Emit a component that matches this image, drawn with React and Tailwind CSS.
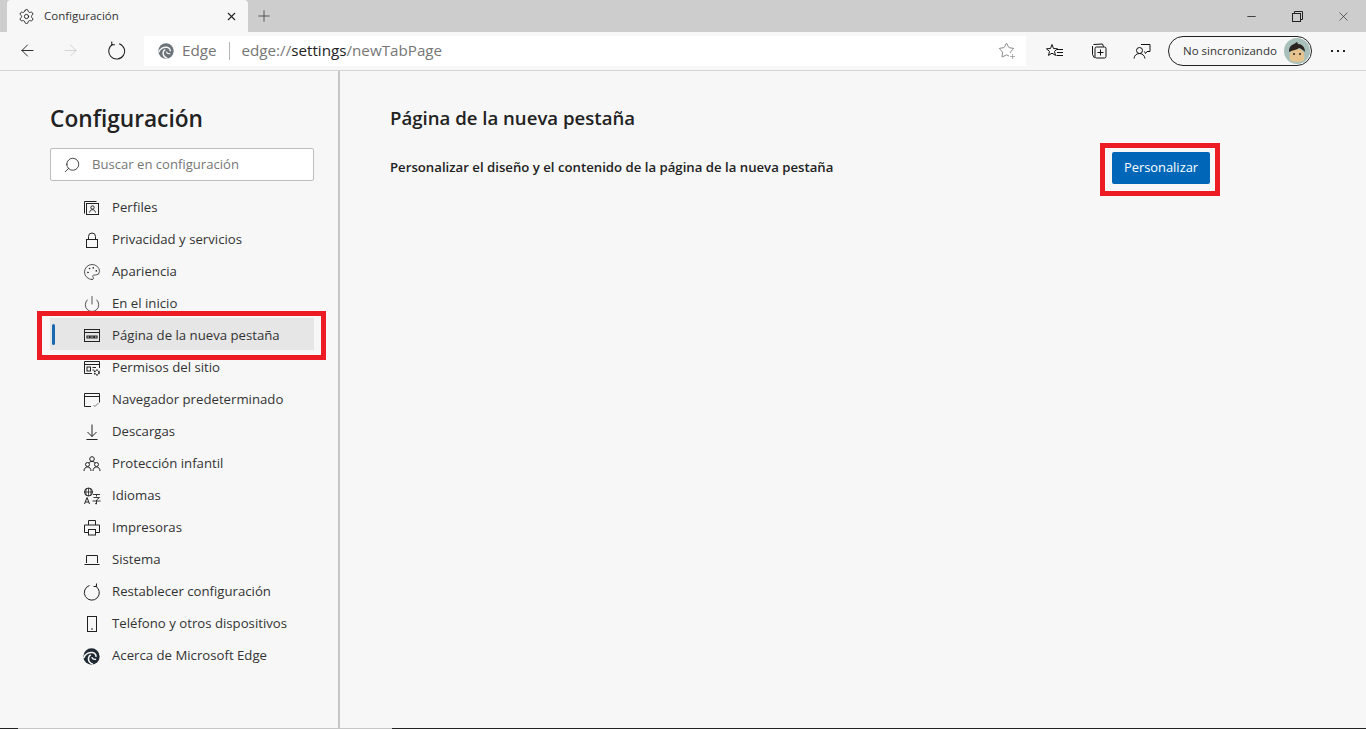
import { Search, Palette, Power, ArrowLeft, ArrowRight, Settings, X, Plus, Minus, Star } from "lucide-react";

const font = { fontFamily: '"Open Sans", "Noto Sans", sans-serif' };

function Svg({ children, size = 18, className = "" }) {
  return (
    <svg width={size} height={size} viewBox="0 0 18 18" fill="none" stroke="currentColor" strokeWidth="1" className={className}>
      {children}
    </svg>
  );
}

function EdgeLogo({ size = 16, color = "#1f2933" }) {
  return (
    <svg width={size} height={size} viewBox="0 0 24 24" fill="none">
      <circle cx="12" cy="12" r="11.500" fill={color} />
      <path d="M1 14c2-6 8-8.500 12.500-7.500 3.500.8 5.500 3.500 4.500 6" stroke="#f7f7f7" strokeWidth="2.200" />
      <path d="M14 23c-4-1.500-7-5-6-9.500.4-1.800 1.500-3 3-3.500" stroke="#f7f7f7" strokeWidth="2.200" />
      <path d="M12.500 13c.5 2 3 3.500 6 3" stroke="#f7f7f7" strokeWidth="1.800" />
    </svg>
  );
}

const ProfileIcon = () => (
  <Svg>
    <path d="M1.500 14.500V2.500h12" />
    <rect x="3.500" y="4.500" width="12" height="11" />
    <circle cx="9.500" cy="8.500" r="1.700" />
    <path d="M6.500 13.500c.5-2 1.500-2.800 3-2.800s2.500.8 3 2.800" />
  </Svg>
);
const LockIcon = () => (
  <Svg>
    <rect x="3.500" y="8.500" width="11" height="8" />
    <path d="M5.500 8.500V5.500a3.500 3.500 0 0 1 7 0v3" />
  </Svg>
);
const NewTabIcon = () => (
  <Svg>
    <rect x="1.500" y="2.500" width="15" height="12" />
    <path d="M1.500 5.500h15" />
    <path d="M4 9h2.500v2H4zM7.800 9h2.500v2H7.800zM11.500 9H14v2h-2.500z" strokeWidth="1.100" />
  </Svg>
);
const SiteIcon = () => (
  <Svg>
    <path d="M9 14.500H1.500v-12h15V9" />
    <path d="M1.500 5.500h15" />
    <rect x="4" y="8" width="3.500" height="4" />
    <path d="M9.500 8.500H13M9.500 11H11" />
    <circle cx="13.800" cy="13.500" r="2.300" strokeWidth="1.500" strokeDasharray="1.500 .8" />
  </Svg>
);
const BrowserIcon = () => (
  <Svg>
    <path d="M8 15.500H1.500v-13h15v9" />
    <path d="M1.500 5.500h15" />
    <path d="M10.500 14l1.500 1.500 3.500-3.500" stroke="#777" />
  </Svg>
);
const DownloadIcon = () => (
  <Svg>
    <path d="M9 1.500v12M4.500 9L9 13.500 13.500 9M3.500 16.500h11" />
  </Svg>
);
const FamilyIcon = () => (
  <Svg>
    <circle cx="9" cy="4" r="2.300" />
    <circle cx="4.500" cy="9.500" r="2" />
    <circle cx="13.500" cy="9.500" r="2" />
    <path d="M1 16c0-2.500 1.500-4 3.500-4s3.500 1.500 3.500 4M10 16c0-2.500 1.500-4 3.500-4s3.500 1.500 3.500 4M6 8c.5-1 1.500-1.500 3-1.500S11.500 7 12 8" />
  </Svg>
);
const LangIcon = () => (
  <Svg>
    <circle cx="5.500" cy="5" r="4" />
    <path d="M1.500 5h8M5.500 1v8M3.500 1.500c-.8 2-.8 5 0 7M7.500 1.500c.8 2 .8 5 0 7" strokeWidth=".8" />
    <path d="M1.500 17l2.500-6.500L6.500 17M2.500 15h3" />
    <path d="M10 7.500h7M13.500 7.500v2M10.500 10.500h6l-3 2.500v4l-1.500-.5M9.500 14h8" strokeWidth=".9" />
  </Svg>
);
const PrinterIcon = () => (
  <Svg>
    <path d="M5.500 6V1.500h7V6" />
    <path d="M5 13.500H1.500V6h15v7.500H13" />
    <rect x="5.500" y="10.500" width="7" height="5.500" />
  </Svg>
);
const LaptopIcon = () => (
  <Svg>
    <path d="M3.500 12V4.500h11V12" />
    <path d="M1.500 13.500h15" />
  </Svg>
);
const ReloadIcon = ({ size = 18, className = "" }) => (
  <Svg size={size} className={className}>
    <path d="M6.500 2.500a7.500 7.500 0 1 0 6 .6" />
    <path d="M13.500 .5v3h-3" />
  </Svg>
);
const PhoneIcon = () => (
  <Svg>
    <rect x="4.500" y="1.500" width="9" height="15" />
    <path d="M8 14h2" />
  </Svg>
);

const navItems = [
  { label: "Perfiles", icon: <ProfileIcon /> },
  { label: "Privacidad y servicios", icon: <LockIcon /> },
  { label: "Apariencia", icon: <Palette size={18} strokeWidth={1} /> },
  { label: "En el inicio", icon: <Power size={18} strokeWidth={1} /> },
  { label: "Página de la nueva pestaña", icon: <NewTabIcon />, active: true },
  { label: "Permisos del sitio", icon: <SiteIcon /> },
  { label: "Navegador predeterminado", icon: <BrowserIcon /> },
  { label: "Descargas", icon: <DownloadIcon /> },
  { label: "Protección infantil", icon: <FamilyIcon /> },
  { label: "Idiomas", icon: <LangIcon /> },
  { label: "Impresoras", icon: <PrinterIcon /> },
  { label: "Sistema", icon: <LaptopIcon /> },
  { label: "Restablecer configuración", icon: <ReloadIcon /> },
  { label: "Teléfono y otros dispositivos", icon: <PhoneIcon /> },
  { label: "Acerca de Microsoft Edge", icon: <EdgeLogo size={17} /> },
];

function TabStrip() {
  return (
    <div className="flex h-[32px] shrink-0 bg-[#cdcdcd] pl-[7px]">
      <div className="flex w-[241px] items-center rounded-t-[4px] bg-[#f7f7f7] pl-[11px] pr-[10px]">
        <Settings size={17} strokeWidth={1.200} className="text-[#111]" />
        <span className="ml-[9px] flex-1 text-[11.500px] text-[#333]">Configuración</span>
        <X size={13} strokeWidth={2} className="text-[#222]" />
      </div>
      <div className="ml-[7px] flex items-center">
        <Plus size={18} strokeWidth={1} className="text-[#333]" />
      </div>
      <div className="ml-auto flex items-center">
        <div className="flex w-[46px] justify-center">
          <Minus size={13} strokeWidth={1.500} className="text-[#222]" />
        </div>
        <div className="flex w-[46px] justify-center">
          <svg width="11" height="11" viewBox="0 0 11 11" fill="none" stroke="#222" strokeWidth="1">
            <rect x=".5" y="2.500" width="8" height="8" />
            <path d="M2.500 2.500V.5h8v8H8.500" />
          </svg>
        </div>
        <div className="flex w-[46px] justify-center">
          <X size={15} strokeWidth={1} className="text-[#222]" />
        </div>
      </div>
    </div>
  );
}

function ToolBar() {
  return (
    <div className="flex h-[39px] shrink-0 items-center border-b border-[#d4d4d4] bg-[#f7f7f7] pb-[1px]">
      <ArrowLeft size={19} strokeWidth={1.100} className="ml-[18px] text-[#111]" />
      <ArrowRight size={19} strokeWidth={1} className="ml-[24px] text-[#c8c8c8]" />
      <ReloadIcon size={19} className="ml-[27px] -scale-x-100 text-[#222]" />
      <div className="ml-[18px] flex h-[30px] w-[882px] items-center bg-white pl-[14px] pr-[11px]">
        <EdgeLogo size={16} color="#6b7278" />
        <span className="ml-[8px] text-[15.200px] text-[#767676]">Edge</span>
        <span className="ml-[12px] h-[18px] w-px bg-[#b5b5b5]" />
        <span className="ml-[12px] flex-1 text-[15.200px] text-[#767676]">
          edge://<span className="text-[#222]">settings</span>/newTabPage
        </span>
        <span className="relative">
          <Star size={17} strokeWidth={1} className="text-[#555]" />
          <Plus size={7} strokeWidth={1.500} className="absolute -bottom-[1px] -right-[1px] bg-white text-[#555]" />
        </span>
      </div>
      <Svg className="ml-[20px] text-[#111]">
        <path d="M6 2.500l1.500 4 4 .3-3 2.600 1 4-3.500-2.200-3.500 2.200 1-4-3-2.600 4-.3z" />
        <path d="M11 7.500h6M11 10.500h6M10.500 13.500h6.500" />
      </Svg>
      <Svg className="ml-[26px] text-[#111]">
        <path d="M2.500 4v8.500l2 3.500" />
        <path d="M3.500 2.500l9-.5 1 2.500" />
        <rect x="5" y="5" width="11" height="11" rx="1.500" />
        <path d="M10.500 7.500v6M7.500 10.500h6" />
      </Svg>
      <Svg className="ml-[25px] text-[#111]">
        <path d="M8 2.500h9v7h-3l-1.500 2-1-2" />
        <circle cx="6.500" cy="8.500" r="3" />
        <path d="M1 16.500c.3-3 2.500-5 5.500-5s5 2 5.500 5" />
      </Svg>
      <div className="ml-[17px] flex h-[30px] w-[144px] items-center rounded-full border border-[#222] pl-[14px] pr-[1px]">
        <span className="flex-1 text-[11.500px] text-[#333]">No sincronizando</span>
        <svg width="26" height="26" viewBox="0 0 26 26">
          <circle cx="13" cy="13" r="13" fill="#a9c0ba" />
          <path d="M6 22c-1-6 0-11 7-11s8 5 7 11c-2 2.500-12 2.500-14 0z" fill="#e7c48d" />
          <path d="M5 14c0-5 2-7 5-8l3-2 1 2c4 0 7 3 7 8-2-2-4-3.500-6-4-2 2-6 2-10 4z" fill="#2a2320" />
          <circle cx="10" cy="16" r="1" fill="#2a2320" />
          <circle cx="16" cy="16" r="1" fill="#2a2320" />
        </svg>
      </div>
      <div className="ml-[19px] flex gap-[4px]">
        <span className="h-[2px] w-[2px] bg-[#222]" />
        <span className="h-[2px] w-[2px] bg-[#222]" />
        <span className="h-[2px] w-[2px] bg-[#222]" />
      </div>
    </div>
  );
}

function Sidebar() {
  return (
    <aside className="relative w-[340px] shrink-0 border-r-2 border-[#c6c6c6] pl-[50px] pt-[32px]">
      <h1 className="text-[22.700px] font-semibold leading-[32px] text-[#222]">Configuración</h1>
      <div className="mt-[13px] flex h-[33px] w-[264px] items-center rounded-[2px] border border-[#bdbdbd] bg-white pl-[12px]">
        <Search size={18} strokeWidth={1.100} className="-scale-x-100 text-[#222]" />
        <span className="ml-[11px] text-[13.100px] text-[#767676]">Buscar en configuración</span>
      </div>
      <nav className="mt-[9px] flex w-[264px] flex-col">
        {navItems.map((item) => (
          <div
            key={item.label}
            className={`relative flex h-[32px] items-center pl-[33px] pt-[4px] ${item.active ? "bg-[#e6e6e6]" : ""}`}
          >
            {item.active && (
              <span className="absolute left-[2px] top-[6px] h-[21px] w-[3px] rounded-full bg-[#1a69b0]" />
            )}
            <span className="flex w-[29px] shrink-0 text-[#222]">{item.icon}</span>
            <span className="text-[13.200px] text-[#333]">{item.label}</span>
          </div>
        ))}
      </nav>
      {/* recuadro rojo sobre la captura */}
      <div className="absolute left-[37px] top-[240px] h-[49px] w-[289px] border-[5px] border-[#ed1c24]" />
    </aside>
  );
}

function Content() {
  return (
    <main className="flex-1 pl-[50px] pr-[156px] pt-[32px]">
      <h2 className="text-[18.600px] font-semibold leading-[30px] text-[#222]">Página de la nueva pestaña</h2>
      <div className="mt-[19px] flex h-[32px] items-center justify-between">
        <span className="text-[13.200px] font-semibold text-[#222]">
          Personalizar el diseño y el contenido de la página de la nueva pestaña
        </span>
        <button className="relative h-[32px] w-[98px] rounded-[2px] bg-[#0067b8] text-[12.900px] text-white">
          Personalizar
          <span className="absolute -left-[12px] -top-[9px] h-[53px] w-[120px] border-[5px] border-[#ed1c24]" />
        </button>
      </div>
    </main>
  );
}

export default function App() {
  return (
    <div className="flex h-[729px] w-[1366px] flex-col overflow-hidden bg-[#f7f7f7]" style={font}>
      <TabStrip />
      <ToolBar />
      <div className="flex flex-1">
        <Sidebar />
        <Content />
      </div>
      <div className="flex h-px shrink-0 bg-[#c6c6c6]">
        <span className="w-[18px] bg-[#222]" />
        <span className="w-[374px]" />
        <span className="flex-1 bg-[#222]" />
      </div>
    </div>
  );
}
